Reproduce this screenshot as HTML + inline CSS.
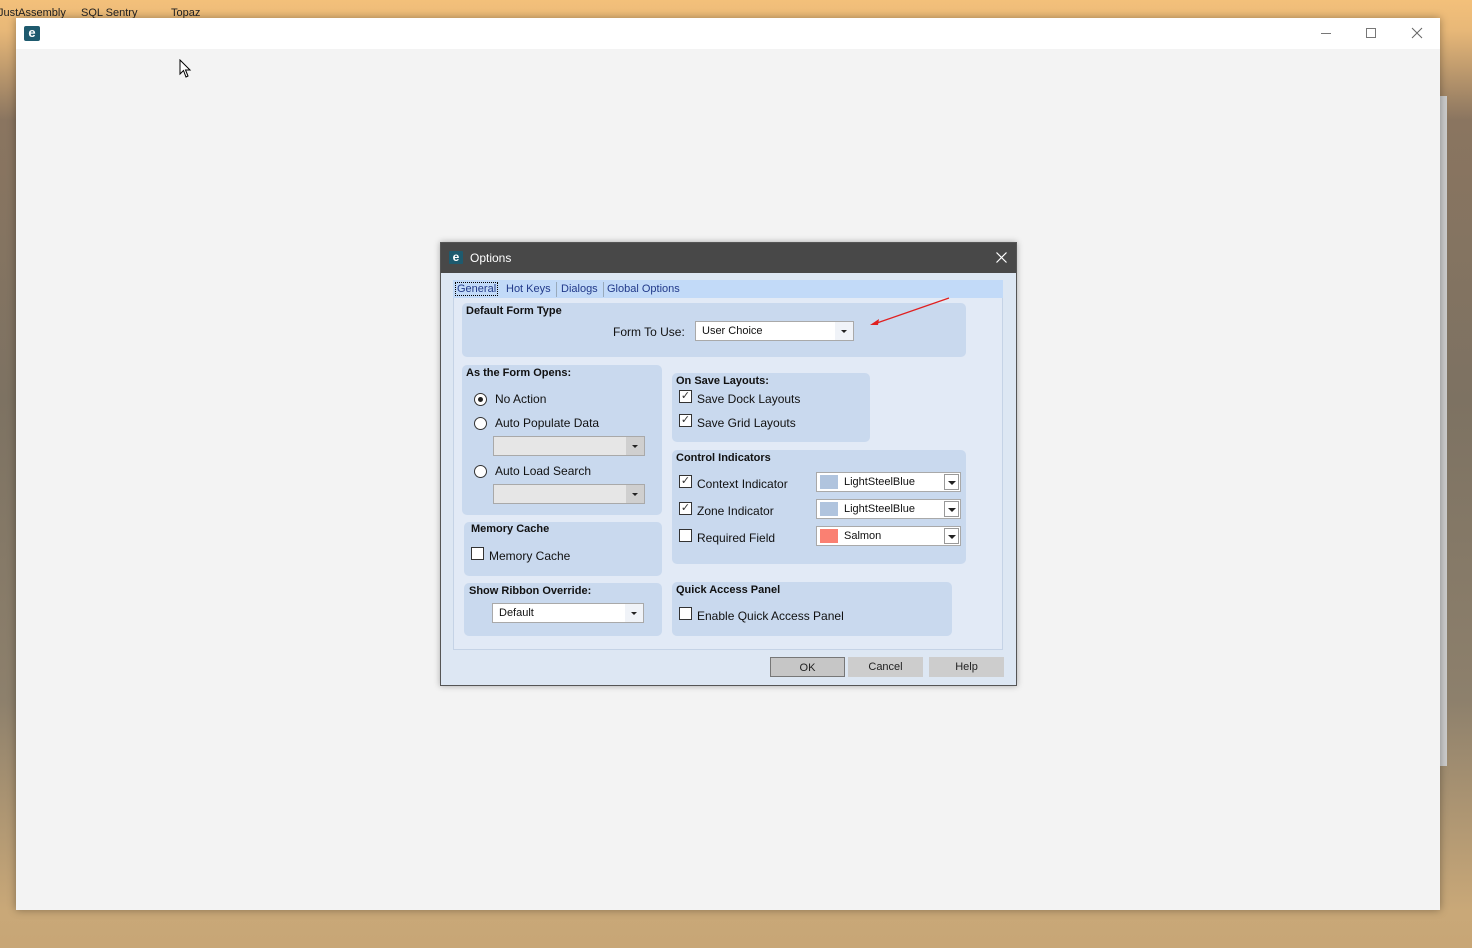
<!DOCTYPE html>
<html><head><style>
*{margin:0;padding:0;box-sizing:border-box}
body{width:1472px;height:948px;overflow:hidden;position:relative;font-family:"Liberation Sans",sans-serif;background:linear-gradient(180deg,#f3c07a 0px,#e8b878 30px,#8a7560 120px,#7d7262 400px,#8d806c 700px,#c9a878 910px,#c8a676 948px)}
.a{position:absolute}
.win{left:16px;top:18px;width:1424px;height:892px;background:#f3f3f3;box-shadow:0 0 8px rgba(0,0,0,.35)}
.tb{left:0;top:0;width:1424px;height:31px;background:#fff}
.g{position:absolute;background:#c9d9ee;border-radius:5px}
.gt{position:absolute;font-size:11px;font-weight:bold;color:#111}
.t{position:absolute;font-size:12px;color:#111;white-space:nowrap}
.cb{position:absolute;width:13px;height:13px;border:1px solid #333;background:#fff;font-size:11px;line-height:11px;text-align:center;color:#333}
.rb{position:absolute;width:13px;height:13px;border:1px solid #333;border-radius:50%;background:#fff}
.dd{position:absolute;height:20px;border:1px solid #a9a9a9;background:#fff;font-size:11px;line-height:18px;padding-left:6px;color:#111}
.dd i{position:absolute;right:0;top:0;width:18px;height:18px;background:#f0f3f8}
.dd i:after{content:"";position:absolute;left:6px;top:8px;border:3px solid transparent;border-top:3px solid #222;border-bottom:0}
.dd.c i{background:#fff;border:1px solid #999;top:1px;right:1px;width:15px;height:16px}
.dd.c i:after{left:3px;top:6px;border-width:4px 4px 0}
.dg{background:#e6e6e6}
.dg i{background:#cfcfcf}
.btn{position:absolute;top:657px;width:75px;height:20px;background:#cdcdcd;font-size:11px;text-align:center;line-height:20px;color:#222}
.sw{position:absolute;left:3px;top:2px;width:18px;height:14px}
</style></head><body>
<div class="a" style="left:0;top:0;font-size:11px;color:#222;">
<span class="a" style="left:-2px;top:7px;white-space:nowrap">JustAssembly</span>
<span class="a" style="left:81px;top:7px;white-space:nowrap">SQL Sentry</span>
<span class="a" style="left:171px;top:7px">Topaz</span>
</div>
<div class="a" style="left:1440px;top:96px;width:7px;height:670px;background:#ccc"></div>
<div class="a win">
 <div class="a tb">
  <div class="a" style="left:8px;top:8px;width:16px;height:15px;background:#1e5a6e;border-radius:2px;color:#fff;font-size:13px;font-weight:bold;line-height:14px;text-align:center">e</div>
  <div class="a" style="left:1305px;top:15px;width:10px;height:1px;background:#777"></div>
  <div class="a" style="left:1350px;top:10px;width:10px;height:10px;border:1px solid #777"></div>
  <svg class="a" style="left:1395px;top:9px" width="12" height="12"><path d="M1 1L11 11M11 1L1 11" stroke="#666" stroke-width="1"/></svg>
 </div>
 <svg class="a" style="left:163px;top:41px" width="14" height="20"><path d="M1 1 L1 15 L4.5 11.5 L7 18 L9 17 L6.5 11 L11 11 Z" fill="#fff" stroke="#000"/></svg>
</div>

<div class="a" style="left:440px;top:242px;width:577px;height:444px;background:#dde7f3;border:1px solid #555;box-shadow:0 0 6px rgba(0,0,0,.3)">
 <div class="a" style="left:0;top:0;width:575px;height:30px;background:#484848">
  <div class="a" style="left:8px;top:8px;width:14px;height:13px;background:#1e5a6e;border-radius:1px;color:#fff;font-size:12px;font-weight:bold;line-height:12px;text-align:center">e</div>
  <div class="a" style="left:29px;top:8px;color:#fff;font-size:12px">Options</div>
  <svg class="a" style="left:555px;top:9px" width="11" height="11"><path d="M0.5 0.5L10.5 10.5M10.5 0.5L0.5 10.5" stroke="#fff" stroke-width="1.2"/></svg>
 </div>
</div>
<div class="a" style="left:453px;top:280px;width:550px;height:18px;background:#c2daf8"></div>
<div class="a" style="left:453px;top:298px;width:550px;height:352px;background:#e2eaf6;border:1px solid #c5d3e6;border-top:0"></div>
<div class="t" style="left:455px;top:282px;font-size:11px;color:#223a8a;border:1px dotted #000;padding:0 1px">General</div>
<div class="t" style="left:506px;top:283px;font-size:11px;color:#223a8a">Hot Keys</div>
<div class="a" style="left:556px;top:282px;width:1px;height:15px;background:#9ab"></div>
<div class="t" style="left:561px;top:283px;font-size:11px;color:#223a8a">Dialogs</div>
<div class="a" style="left:603px;top:282px;width:1px;height:15px;background:#9ab"></div>
<div class="t" style="left:607px;top:283px;font-size:11px;color:#223a8a">Global Options</div>

<div class="g" style="left:462px;top:303px;width:504px;height:54px"></div>
<div class="gt" style="left:466px;top:305px">Default Form Type</div>
<div class="t" style="left:613px;top:325px">Form To Use:</div>
<div class="dd" style="left:695px;top:321px;width:159px">User Choice<i></i></div>
<svg class="a" style="left:866px;top:295px" width="90" height="35"><line x1="83" y1="3" x2="8" y2="29" stroke="#e02020" stroke-width="1.3"/><path d="M4 30 L13 24 L12 30 Z" fill="#e02020"/></svg>

<div class="g" style="left:462px;top:365px;width:200px;height:150px"></div>
<div class="gt" style="left:466px;top:367px">As the Form Opens:</div>
<div class="rb" style="left:474px;top:393px"><div class="a" style="left:3px;top:3px;width:5px;height:5px;border-radius:50%;background:#222"></div></div>
<div class="t" style="left:495px;top:392px">No Action</div>
<div class="rb" style="left:474px;top:417px"></div>
<div class="t" style="left:495px;top:416px">Auto Populate Data</div>
<div class="dd dg" style="left:493px;top:436px;width:152px"><i></i></div>
<div class="rb" style="left:474px;top:465px"></div>
<div class="t" style="left:495px;top:464px">Auto Load Search</div>
<div class="dd dg" style="left:493px;top:484px;width:152px"><i></i></div>

<div class="g" style="left:464px;top:522px;width:198px;height:54px"></div>
<div class="gt" style="left:471px;top:523px">Memory Cache</div>
<div class="cb" style="left:471px;top:547px"></div>
<div class="t" style="left:489px;top:549px">Memory Cache</div>

<div class="g" style="left:464px;top:583px;width:198px;height:53px"></div>
<div class="gt" style="left:469px;top:585px">Show Ribbon Override:</div>
<div class="dd" style="left:492px;top:603px;width:152px">Default<i></i></div>

<div class="g" style="left:672px;top:373px;width:198px;height:69px"></div>
<div class="gt" style="left:676px;top:375px">On Save Layouts:</div>
<div class="cb" style="left:679px;top:390px">✓</div>
<div class="t" style="left:697px;top:392px">Save Dock Layouts</div>
<div class="cb" style="left:679px;top:414px">✓</div>
<div class="t" style="left:697px;top:416px">Save Grid Layouts</div>

<div class="g" style="left:672px;top:450px;width:294px;height:114px"></div>
<div class="gt" style="left:676px;top:452px">Control Indicators</div>
<div class="cb" style="left:679px;top:475px">✓</div>
<div class="t" style="left:697px;top:477px">Context Indicator</div>
<div class="dd c" style="left:816px;top:472px;width:145px;padding-left:27px">LightSteelBlue<span class="sw" style="background:#b0c4de"></span><i></i></div>
<div class="cb" style="left:679px;top:502px">✓</div>
<div class="t" style="left:697px;top:504px">Zone Indicator</div>
<div class="dd c" style="left:816px;top:499px;width:145px;padding-left:27px">LightSteelBlue<span class="sw" style="background:#b0c4de"></span><i></i></div>
<div class="cb" style="left:679px;top:529px"></div>
<div class="t" style="left:697px;top:531px">Required Field</div>
<div class="dd c" style="left:816px;top:526px;width:145px;padding-left:27px">Salmon<span class="sw" style="background:#fa8072"></span><i></i></div>

<div class="g" style="left:672px;top:582px;width:280px;height:54px"></div>
<div class="gt" style="left:676px;top:584px">Quick Access Panel</div>
<div class="cb" style="left:679px;top:607px"></div>
<div class="t" style="left:697px;top:609px">Enable Quick Access Panel</div>

<div class="btn" style="left:770px;border:1px solid #777;background:#c6c6c6">OK</div>
<div class="btn" style="left:848px">Cancel</div>
<div class="btn" style="left:929px">Help</div>
</body></html>
